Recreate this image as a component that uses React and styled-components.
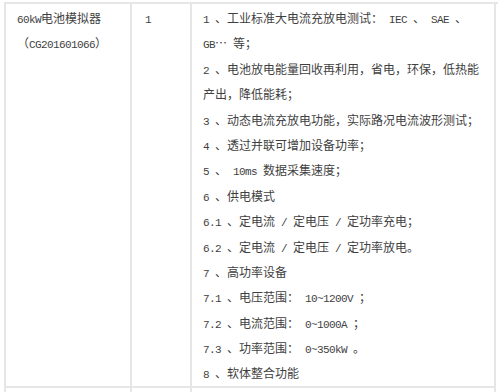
import React from 'react';
import styled, { createGlobalStyle } from 'styled-components';

const GlobalStyle = createGlobalStyle`
  html, body {
    margin: 0;
    padding: 0;
    background: #ffffff;
    overflow: hidden;
  }
  body {
    font-family: "Noto Sans CJK SC", "Liberation Sans", sans-serif;
    font-size: 12px;
    color: #3f3f3f;
  }
`;

const SpecTable = styled.div`
  display: grid;
  grid-template-columns: 126px 60px 304px;
  width: 492px;
  margin: 2px 0 0 4px;
  border-left: 2px solid #e6e6e6;
  border-top: 2px solid #e6e6e6;
`;

const Cell = styled.div`
  border-right: 2px solid #e6e6e6;
  border-bottom: 2px solid #e6e6e6;
  padding: 1px 0 0 ${props => props.$pad}px;
  min-height: ${props => props.$minHeight || 0}px;
`;

const Line = styled.div`
  line-height: 25.4px;
  height: 25.4px;
  white-space: nowrap;
`;

// half-width latin runs, mimics the 6px wide song-ti latin glyphs
const M = styled.span`
  font-family: "Liberation Mono", monospace;
  font-size: 11px;
  letter-spacing: -0.6px;
  white-space: pre;
`;

// full-width ellipsis
const Ellipsis = styled.span`
  display: inline-block;
  width: 12px;
`;

const features = [
  <><M>1 </M>、工业标准大电流充放电测试：<M> IEC </M>、<M> SAE </M>、</>,
  <><M>GB</M><Ellipsis>…</Ellipsis><M> </M>等；</>,
  <><M>2 </M>、电池放电能量回收再利用，省电，环保，低热能</>,
  <>产出，降低能耗；</>,
  <><M>3 </M>、动态电流充放电功能，实际路况电流波形测试；</>,
  <><M>4 </M>、透过并联可增加设备功率；</>,
  <><M>5 </M>、<M> 10ms </M>数据采集速度；</>,
  <><M>6 </M>、供电模式</>,
  <><M>6.1 </M>、定电流<M> / </M>定电压<M> / </M>定功率充电；</>,
  <><M>6.2 </M>、定电流<M> / </M>定电压<M> / </M>定功率放电。</>,
  <><M>7 </M>、高功率设备</>,
  <><M>7.1 </M>、电压范围：<M> 10~1200V </M>；</>,
  <><M>7.2 </M>、电流范围：<M> 0~1000A </M>；</>,
  <><M>7.3 </M>、功率范围：<M> 0~350kW </M>。</>,
  <><M>8 </M>、软体整合功能</>,
];

export default function App() {
  return (
    <>
      <GlobalStyle />
      <SpecTable>
        <Cell $pad={11}>
          <Line><M>60kW</M>电池模拟器</Line>
          <Line>（<M>CG201601066</M>）</Line>
        </Cell>
        <Cell $pad={13}>
          <Line><M>1</M></Line>
        </Cell>
        <Cell $pad={11}>
          {features.map((f, i) => (
            <Line key={i}>{f}</Line>
          ))}
        </Cell>
        <Cell $pad={11} $minHeight={40} />
        <Cell $pad={13} $minHeight={40} />
        <Cell $pad={11} $minHeight={40} />
      </SpecTable>
    </>
  );
}
